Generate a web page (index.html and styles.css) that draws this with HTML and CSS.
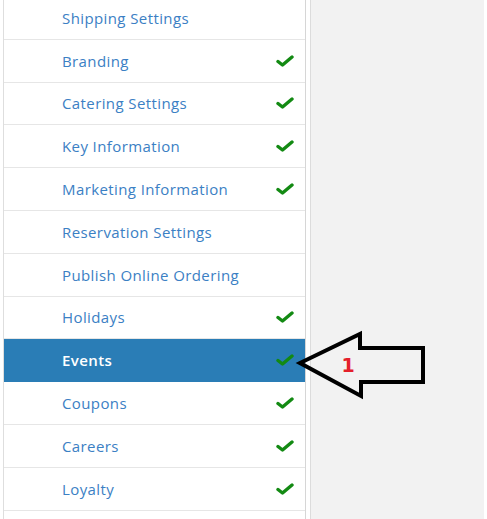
FILE: index.html
```html
<!DOCTYPE html>
<html lang="en">
<head>
  <meta charset="UTF-8">
  <meta name="viewport" content="width=device-width, initial-scale=1.0">
  <title>Settings menu</title>
  <link rel="stylesheet" href="styles.css">
</head>
<body>
  <!-- Menu lateral de ajustes -->
  <nav class="menu" aria-label="Settings">
    <ul class="menu-list">
      <li class="menu-item"><a href="#shipping">Shipping Settings</a></li>
      <li class="menu-item done"><a href="#branding">Branding</a><svg class="check" viewBox="0 0 18 12"><polyline points="2,6.5 6.5,10 16,2"/></svg></li>
      <li class="menu-item done"><a href="#catering">Catering Settings</a><svg class="check" viewBox="0 0 18 12"><polyline points="2,6.5 6.5,10 16,2"/></svg></li>
      <li class="menu-item done"><a href="#key">Key Information</a><svg class="check" viewBox="0 0 18 12"><polyline points="2,6.5 6.5,10 16,2"/></svg></li>
      <li class="menu-item done"><a href="#marketing">Marketing Information</a><svg class="check" viewBox="0 0 18 12"><polyline points="2,6.5 6.5,10 16,2"/></svg></li>
      <li class="menu-item"><a href="#reservation">Reservation Settings</a></li>
      <li class="menu-item"><a href="#publish">Publish Online Ordering</a></li>
      <li class="menu-item done"><a href="#holidays">Holidays</a><svg class="check" viewBox="0 0 18 12"><polyline points="2,6.5 6.5,10 16,2"/></svg></li>
      <li class="menu-item done active"><a href="#events">Events</a><svg class="check" viewBox="0 0 18 12"><polyline points="2,6.5 6.5,10 16,2"/></svg></li>
      <li class="menu-item done"><a href="#coupons">Coupons</a><svg class="check" viewBox="0 0 18 12"><polyline points="2,6.5 6.5,10 16,2"/></svg></li>
      <li class="menu-item done"><a href="#careers">Careers</a><svg class="check" viewBox="0 0 18 12"><polyline points="2,6.5 6.5,10 16,2"/></svg></li>
      <li class="menu-item done"><a href="#loyalty">Loyalty</a><svg class="check" viewBox="0 0 18 12"><polyline points="2,6.5 6.5,10 16,2"/></svg></li>
      <li class="menu-item"></li>
    </ul>
  </nav>

  <main class="content"></main>

  <!-- Flecha de anotación sobre la captura -->
  <svg class="callout" width="487" height="519" viewBox="0 0 487 519" aria-hidden="true">
    <path d="M300,363 L360,334 L360,348 L423,348 L423,382 L361,382 L361,396 Z"/>
    <text x="348" y="372" text-anchor="middle">1</text>
  </svg>
</body>
</html>
```

FILE: styles.css
```css
/* Estilos básicos */
body {
  margin: 0;
  padding: 0;
  height: 519px;
  overflow: hidden;
  display: flex;
  background-color: #fff;
  font-family: "Open Sans", Lato, sans-serif;
}

.menu {
  width: 301px;
  margin-left: 3px;
  border-left: 1px solid #dedede;
  border-right: 1px solid #d6d6d6;
  overflow: hidden;
}

.menu-list {
  list-style: none;
  margin: -3px 0 0;
  padding: 0;
}

.menu-item {
  display: flex;
  align-items: center;
  justify-content: space-between;
  box-sizing: border-box;
  height: 42.8px;
  padding: 0 11px 0 58px;
  border-bottom: 1.5px solid #e6e6e6;
}

.menu-item a {
  color: #3b80c4;
  font-size: 15px;
  letter-spacing: 0.4px;
  text-decoration: none;
}

.menu-item.active {
  background-color: #2a7db6;
  border-bottom-color: #2a7db6;
}

.menu-item.active a {
  color: #fff;
  font-weight: 600;
}

.check {
  width: 18px;
  height: 12px;
}

.check polyline {
  fill: none;
  stroke: #138a13;
  stroke-width: 3.4;
  stroke-linecap: round;
  stroke-linejoin: round;
}

.content {
  flex: 1;
  margin: 0 3px 0 4px;
  border-left: 1px solid #dcdcdc;
  background-color: #f2f2f2;
}

.callout {
  position: absolute; /* Anotación superpuesta al contenido. */
  top: 0;
  left: 0;
}

.callout path {
  fill: none;
  stroke: #000;
  stroke-width: 4;
  stroke-linejoin: miter;
}

.callout text {
  fill: #e4202b;
  font-family: "DejaVu Sans", sans-serif;
  font-weight: bold;
  font-size: 19px;
}
```
